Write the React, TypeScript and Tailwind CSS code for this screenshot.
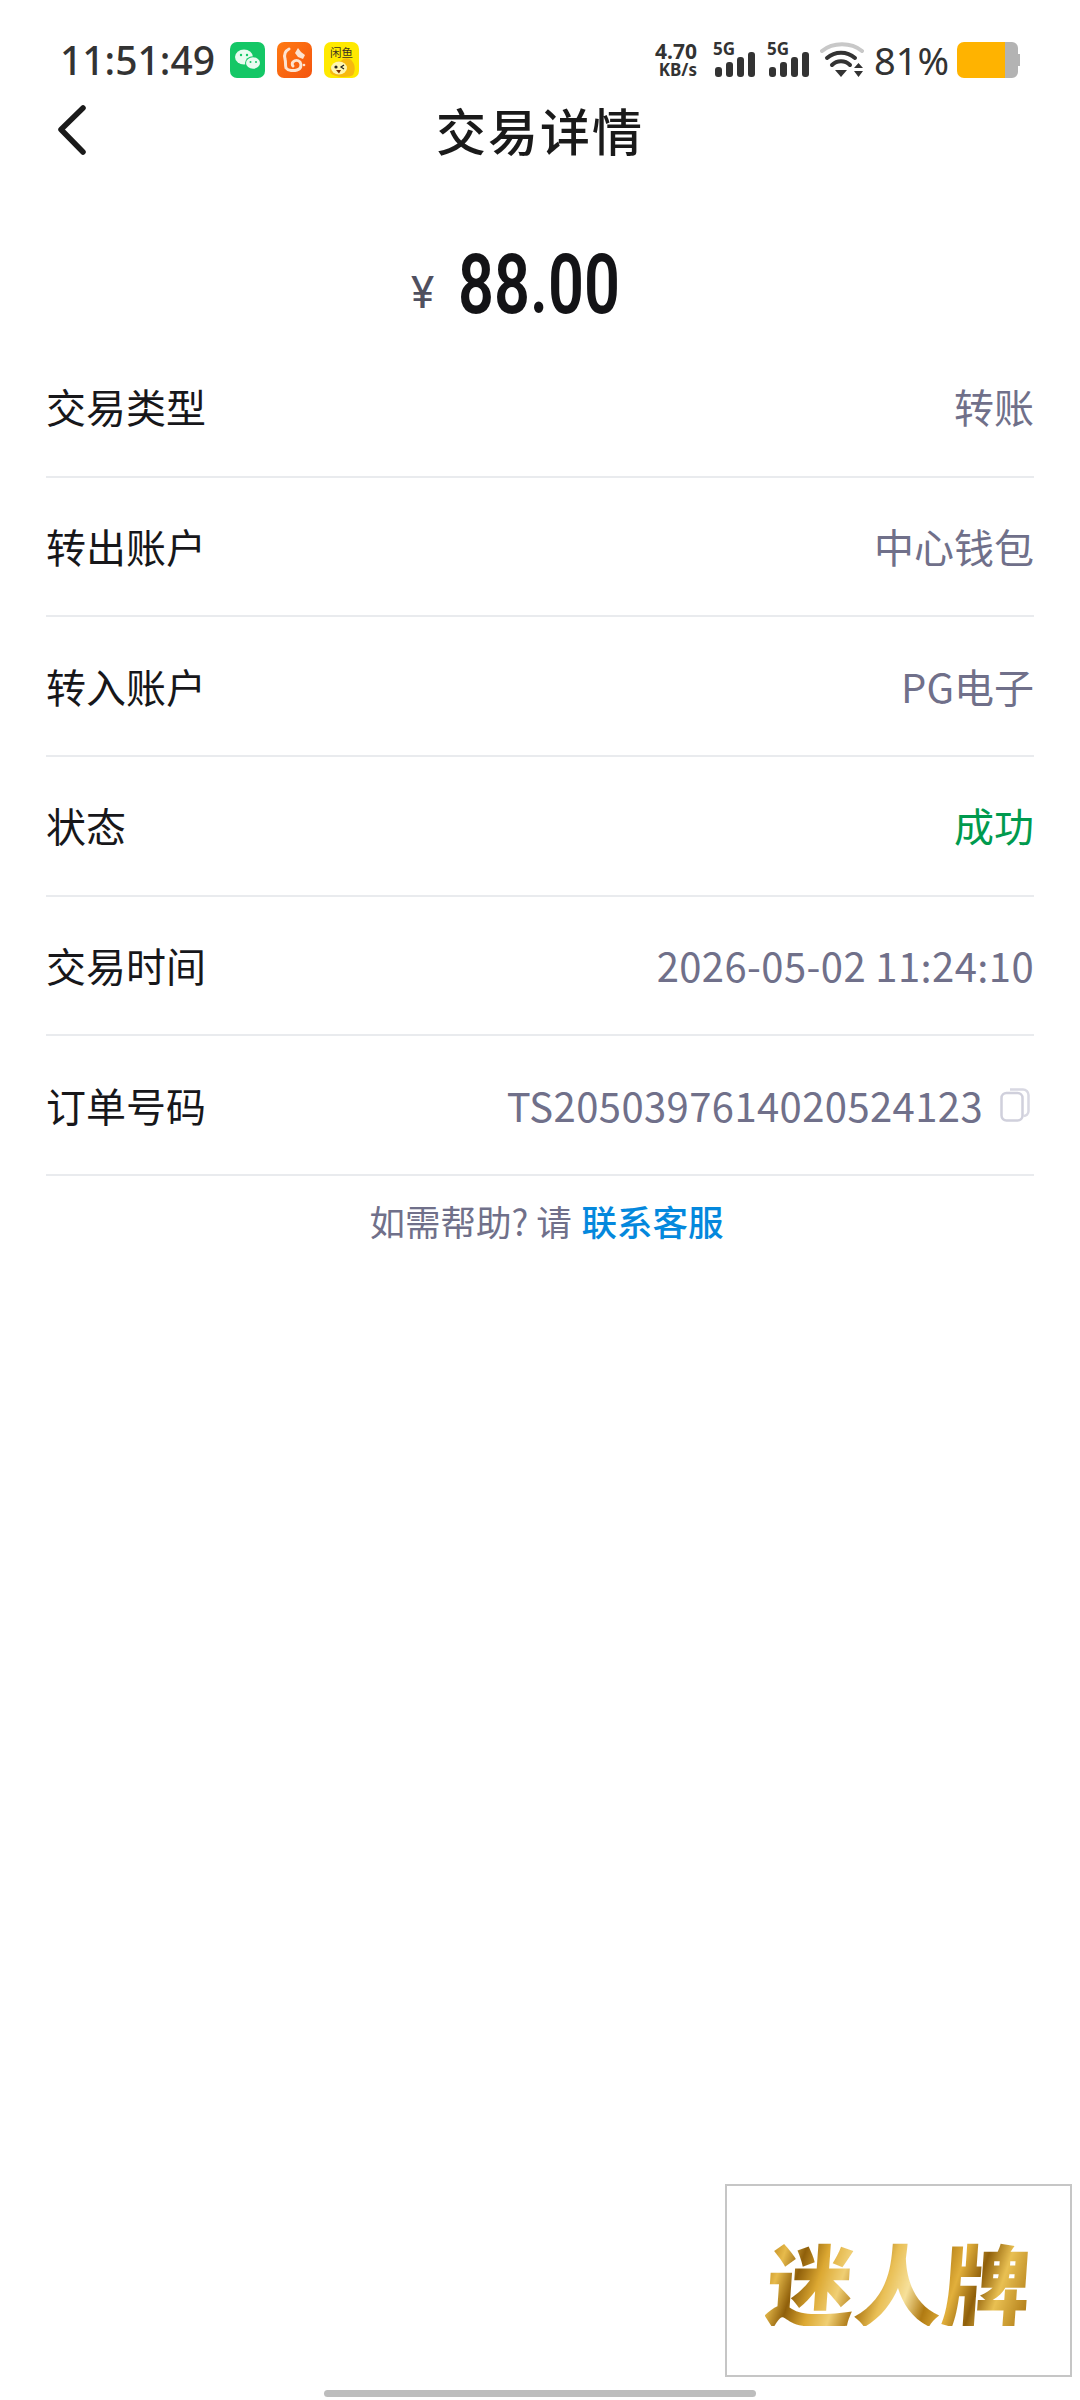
const Sans = '[font-family:"Noto_Sans_CJK_SC","Noto_Sans",sans-serif]';

function Signal() {
  return (
    <svg width="42" height="36" viewBox="0 0 42 36" className="block overflow-visible">
      <text x="0" y="13" fontSize="17" fontWeight="700" fill="#333" fontFamily="Noto Sans, sans-serif">5G</text>
      <rect x="2" y="25" width="7" height="10" rx="3" fill="#333" />
      <rect x="13" y="20" width="7" height="15" rx="3" fill="#333" />
      <rect x="24" y="15" width="7" height="20" rx="3" fill="#333" />
      <rect x="35" y="10" width="7" height="25" rx="3" fill="#333" />
    </svg>
  );
}

function WeChat() {
  return (
    <svg width="35" height="36" viewBox="0 0 35 36" className="block">
      <rect width="35" height="36" rx="7" fill="#14c766" />
      <ellipse cx="14" cy="15" rx="9" ry="7.500" fill="#e9fbf0" />
      <ellipse cx="23" cy="21" rx="8" ry="6.800" fill="#14c766" />
      <ellipse cx="23" cy="21" rx="7" ry="5.800" fill="#e9fbf0" />
      <circle cx="11" cy="13" r="1.200" fill="#14c766" />
      <circle cx="17" cy="13" r="1.200" fill="#14c766" />
      <circle cx="20.500" cy="20" r="1" fill="#14c766" />
      <circle cx="26" cy="20" r="1" fill="#14c766" />
    </svg>
  );
}

function Squirrel() {
  return (
    <svg width="35" height="36" viewBox="0 0 35 36" className="block">
      <defs>
        <linearGradient id="uc" x1="0" y1="0" x2="1" y2="1">
          <stop offset="0" stopColor="#ff7a12" />
          <stop offset="1" stopColor="#f4540f" />
        </linearGradient>
      </defs>
      <rect width="35" height="36" rx="7" fill="url(#uc)" />
      <path d="M12 7c-4 2-5 6-4 10 1 3 0 6 1 9 2 3 8 3 11 2 4-1 5-5 3-8-2-2-5-2-7 0-1 1-1 3 0 4" fill="none" stroke="#fde3d0" strokeWidth="3" strokeLinecap="round" />
      <path d="M21 6l3 4 4 3-2 4-5-2-3-4z" fill="#fde3d0" />
      <circle cx="27" cy="23" r="1.300" fill="#fde3d0" />
    </svg>
  );
}

function Xianyu() {
  return (
    <svg width="35" height="36" viewBox="0 0 35 36" className="block">
      <rect width="35" height="36" rx="7" fill="#ffe900" />
      <text x="17.500" y="15" textAnchor="middle" fontSize="11.500" fill="#3b3320" fontFamily="Noto Sans CJK SC, sans-serif">闲鱼</text>
      <path d="M6 30c0-7 6-11 11-11 4-4 9-3 11 0 4 4 3 11 1 14-3 3-21 3-23-3z" fill="#f7b90f" />
      <ellipse cx="15" cy="26" rx="8" ry="6.500" fill="#fff6b0" />
      <circle cx="12" cy="25" r="1.600" fill="#222" />
      <path d="M20 23l-3 2 3 2" fill="none" stroke="#222" strokeWidth="1.200" />
      <path d="M12 28h5l-2 3.500z" fill="#7a2b00" />
    </svg>
  );
}

function Wifi() {
  return (
    <svg width="44" height="36" viewBox="0 0 44 36" className="block">
      <path d="M2 9C13 0 31 0 42 9" fill="none" stroke="#c8c8c8" strokeWidth="4" strokeLinecap="round" />
      <path d="M7 16C15 9 27 9 35 16" fill="none" stroke="#333" strokeWidth="4" strokeLinecap="round" />
      <path d="M12 23C17 18 25 18 30 23" fill="none" stroke="#333" strokeWidth="4" strokeLinecap="round" />
      <path d="M15 28h12l-6 7z" fill="#333" />
      <path d="M34 26l4.500-5 4.500 5zM34 29h9l-4.500 6z" fill="#333" />
    </svg>
  );
}

function Battery() {
  return (
    <svg width="63" height="36" viewBox="0 0 63 36" className="block">
      <path d="M47 0h8a6 6 0 0 1 6 6v6h2v12h-2v6a6 6 0 0 1-6 6h-8z" fill="#b3b3b3" />
      <path d="M7 0h41v36H7a7 7 0 0 1-7-7V7a7 7 0 0 1 7-7z" fill="#ffb300" />
    </svg>
  );
}

function StatusBar() {
  return (
    <div className="flex h-[88px] items-start justify-between pl-[60px] pr-[60px] pt-[42px]">
      <div className="flex h-[36px] items-center">
        <span className='w-[170px] text-[39px] leading-[36px] font-medium text-[#333] [font-family:"Noto_Sans",sans-serif]'>11:51:49</span>
        <div className="flex gap-[12px]">
          <WeChat />
          <Squirrel />
          <Xianyu />
        </div>
      </div>
      <div className="flex h-[36px] items-center">
        <div className='flex w-[48px] flex-col items-end text-[#333] font-bold [font-family:"Noto_Sans",sans-serif]'>
          <span className="text-[21px] leading-[19px]">4.70</span>
          <span className="text-[17px] leading-[17px]">KB/s</span>
        </div>
        <div className="ml-[16px]"><Signal /></div>
        <div className="ml-[12px]"><Signal /></div>
        <div className="ml-[11px]"><Wifi /></div>
        <span className='ml-[10px] text-[38px] leading-[38px] text-[#333] [font-family:"Noto_Sans",sans-serif]'>81%</span>
        <div className="ml-[8px]"><Battery /></div>
      </div>
    </div>
  );
}

function CopyIcon() {
  return (
    <svg width="30" height="34" viewBox="0 0 30 34" className="block">
      <path d="M10 1.500h13a5.500 5.500 0 0 1 5.500 5.500v16a5 5 0 0 1-5 5" fill="none" stroke="#d8d8e2" strokeWidth="2.500" />
      <rect x="1.500" y="5" width="21" height="27.500" rx="5" fill="#fff" stroke="#d0d0dc" strokeWidth="2.500" />
    </svg>
  );
}

const rows: { label: string; value: string; color?: string; copy?: boolean; spaced?: boolean }[] = [
  { label: "交易类型", value: "转账" },
  { label: "转出账户", value: "中心钱包" },
  { label: "转入账户", value: "PG电子" },
  { label: "状态", value: "成功", color: "text-[#009a4e]" },
  { label: "交易时间", value: "2026-05-02 11:24:10", spaced: true },
  { label: "订单号码", value: "TS2050397614020524123", copy: true, spaced: true },
];

export default function App() {
  return (
    <div className={`relative h-[2400px] w-[1080px] overflow-hidden bg-white ${Sans}`}>
      <StatusBar />
      <header className="relative flex h-[88px] items-center justify-center">
        <svg width="34" height="50" viewBox="0 0 34 50" className="absolute left-[55px] top-[17px]">
          <path d="M28 3 6 24.500 28 47" fill="none" stroke="#1a1a1a" strokeWidth="5.500" strokeLinecap="round" strokeLinejoin="round" />
        </svg>
        <h1 className="mt-[-6px] text-[50px] leading-[60px] font-medium tracking-[2px] text-[#1a1a1a]">交易详情</h1>
      </header>
      <div className="flex h-[163px] items-start pl-[411px] pt-[73px]">
        <span className='mt-[20px] w-[47px] text-[44px] leading-[48px] text-[#50505f] [font-family:"Roboto",sans-serif]'>¥</span>
        <span className='w-[160px] origin-left scale-x-[0.75] whitespace-nowrap text-[84px] leading-[72px] font-semibold text-[#131316] [font-family:"Roboto",sans-serif]'>88.00</span>
      </div>
      <div className="mx-[46px] mt-[-1px]">
        {rows.map((r) => (
          <div key={r.label} className="flex h-[139.700px] items-center justify-between border-b-2 border-[#e9ebee] pb-[1px]">
            <span className="text-[40px] leading-[48px] text-[#17171a]">{r.label}</span>
            <div className="flex items-center">
              <span className={`text-[40px] leading-[48px] ${r.spaced ? "tracking-[0.400px]" : ""} ${r.color ?? "text-[#70708a]"}`}>{r.value}</span>
              {r.copy && <div className="ml-[17px] mr-[4px]"><CopyIcon /></div>}
            </div>
          </div>
        ))}
      </div>
      <p className="mt-[21px] pl-[13px] text-center text-[35.500px] leading-[48px] text-[#70708a]">
        如需帮助? 请 <span className="ml-[2px] font-medium text-[#0488dd]">联系客服</span>
      </p>
      <div className="absolute left-[725px] top-[2184px] flex h-[193px] w-[347px] items-center border-2 border-[#c6c6c6] bg-white pl-[40px]">
        <span className="skew-x-[-4deg] whitespace-nowrap bg-[linear-gradient(105deg,#b47c12_0%,#e7bb4c_7%,#8f5f0a_14%,#dca832_22%,#f0cf74_30%,#a8720e_38%,#e9bf55_46%,#f6e09a_54%,#b07a12_62%,#e2b03c_70%,#8f5f0a_78%,#e9c052_86%,#a8720e_100%)] bg-clip-text text-[88px] leading-[90px] font-black text-transparent">迷人牌</span>
      </div>
      <div className="absolute left-[324px] top-[2390px] h-[7px] w-[432px] rounded-full bg-[#bdbdbd]" />
    </div>
  );
}
